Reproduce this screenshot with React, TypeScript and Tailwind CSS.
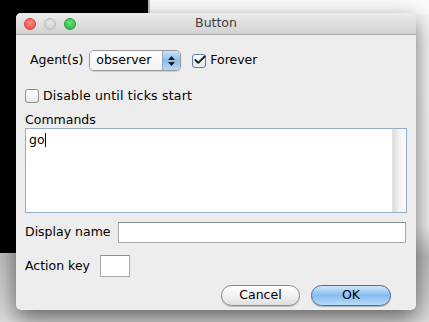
import { Check } from "lucide-react";

const font = { fontFamily: '"DejaVu Sans", "Liberation Sans", sans-serif' };

function Traffic() {
  return (
    <div className="flex items-center gap-[8px]">
      <span className="w-[12px] h-[12px] rounded-full bg-[radial-gradient(circle_at_50%_35%,#ff8a80,#e8453c)] border border-[#d1403a]" />
      <span className="w-[12px] h-[12px] rounded-full bg-[radial-gradient(circle_at_50%_35%,#e6e6e6,#c8c8c8)] border border-[#b8b8b8]" />
      <span className="w-[12px] h-[12px] rounded-full bg-[radial-gradient(circle_at_50%_35%,#6ee07a,#25b33a)] border border-[#1f9d33]" />
    </div>
  );
}

function Select() {
  return (
    <div className="flex h-[21px] w-[92px] rounded-[5px] border border-[#9a9a9a] overflow-hidden shadow-[0_1px_1px_rgba(0,0,0,0.15)]">
      <div className="flex-1 bg-gradient-to-b from-white to-[#f1f1f1] flex items-center pl-[6px] text-[12.5px] text-black">
        observer
      </div>
      <div className="w-[18px] border-l border-[#8aa8c8] bg-gradient-to-b from-[#cfe3f8] via-[#8cbcea] to-[#bcd9f5] flex flex-col items-center justify-center gap-[2px]">
        <svg width="7" height="4" viewBox="0 0 7 4"><path d="M0 4 L3.5 0 L7 4 Z" fill="#1a1a1a" /></svg>
        <svg width="7" height="4" viewBox="0 0 7 4"><path d="M0 0 L3.5 4 L7 0 Z" fill="#1a1a1a" /></svg>
      </div>
    </div>
  );
}

function CheckBox({ checked }: { checked?: boolean }) {
  return (
    <span
      className={
        "relative shrink-0 w-[14px] h-[14px] rounded-[3px] border bg-gradient-to-b from-white to-[#e8e8e8] " +
        (checked ? "border-[#5a7fb0]" : "border-[#8e8e8e]")
      }
    >
      {checked && (
        <Check className="absolute left-[0px] top-[-2px] w-[14px] h-[14px] text-[#1b1b1b]" strokeWidth={3.2} />
      )}
    </span>
  );
}

export default function App() {
  return (
    <div
      className="relative w-[429px] h-[322px] overflow-hidden bg-[linear-gradient(180deg,#f6f6f6_0%,#f0f0f0_70%,#bdbdbd_80%,#dcdcdc_100%)]"
      style={font}
    >
      {/* desktop behind */}
      <div className="absolute left-0 top-0 w-[148px] h-[253px] bg-black" />
      <div className="absolute left-[148px] top-0 w-[2px] h-[14px] bg-[#bdbdbd]" />
      <div className="absolute left-[150px] top-0 right-0 h-[14px] bg-[#fafafa]" />

      {/* dialog */}
      <div className="absolute left-[16px] top-[13px] w-[400px] h-[297px] rounded-[5px] bg-[#ededed] shadow-[0_8px_22px_rgba(0,0,0,0.55)] flex flex-col">
        <div className="relative h-[22px] rounded-t-[5px] bg-gradient-to-b from-[#ececec] to-[#d2d2d2] border-b border-[#a9a9a9] flex items-center pl-[8px]">
          <Traffic />
          <span className="absolute left-0 right-0 text-center text-[12.5px] text-[#3c3c3c]">Button</span>
        </div>

        <div className="flex flex-col pl-[9px] pr-[9px] text-[12.5px] text-black whitespace-nowrap">
          <div className="flex items-center mt-[15px] ml-[5px] h-[21px]">
            <span>Agent(s)</span>
            <span className="ml-[6px]"><Select /></span>
            <span className="ml-[11px] flex items-center gap-[4px]">
              <CheckBox checked />
              <span>Forever</span>
            </span>
          </div>

          <div className="flex items-center gap-[4px] mt-[17px] h-[16px]">
            <CheckBox />
            <span className="tracking-[0.2px]">Disable until ticks start</span>
          </div>

          <div className="mt-[8px] leading-[16px]">Commands</div>
          <div className="h-[85px] w-[382px] border border-[#98aec4] bg-white flex">
            <div className="flex-1 pl-[3px] pt-[4px] leading-[14px]">
              go<span className="inline-block w-[1px] h-[14px] bg-black align-top" />
            </div>
            <div className="w-[14px] border-l border-[#e2e2e2] bg-gradient-to-r from-[#dcdcdc] via-[#f4f4f4] to-[#fbfbfb]" />
          </div>

          <div className="flex items-center mt-[9px] h-[21px]">
            <span>Display name</span>
            <div className="ml-[7px] shrink-0 w-[288px] h-[21px] border border-[#a8a8a8] border-t-[#8c8c8c] bg-white" />
          </div>

          <div className="flex items-center mt-[12px] h-[22px]">
            <span>Action key</span>
            <div className="ml-[10px] shrink-0 w-[30px] h-[22px] border border-[#a8a8a8] border-t-[#8c8c8c] bg-white" />
          </div>

          <div className="flex justify-end gap-[11px] mt-[8px] mr-[16px]">
            <button className="w-[79px] h-[21px] rounded-full border border-[#8a8a8a] bg-gradient-to-b from-white via-[#f2f2f2] to-[#dedede] text-[12.5px] leading-none shadow-[0_1px_1px_rgba(0,0,0,0.2)]">
              Cancel
            </button>
            <button className="w-[80px] h-[21px] rounded-full border border-[#4a6f9e] bg-gradient-to-b from-[#d0e6fa] via-[#86bdee] to-[#b9dcfa] text-[12.5px] leading-none shadow-[0_1px_1px_rgba(0,0,0,0.25)]">
              OK
            </button>
          </div>
        </div>
      </div>
    </div>
  );
}
